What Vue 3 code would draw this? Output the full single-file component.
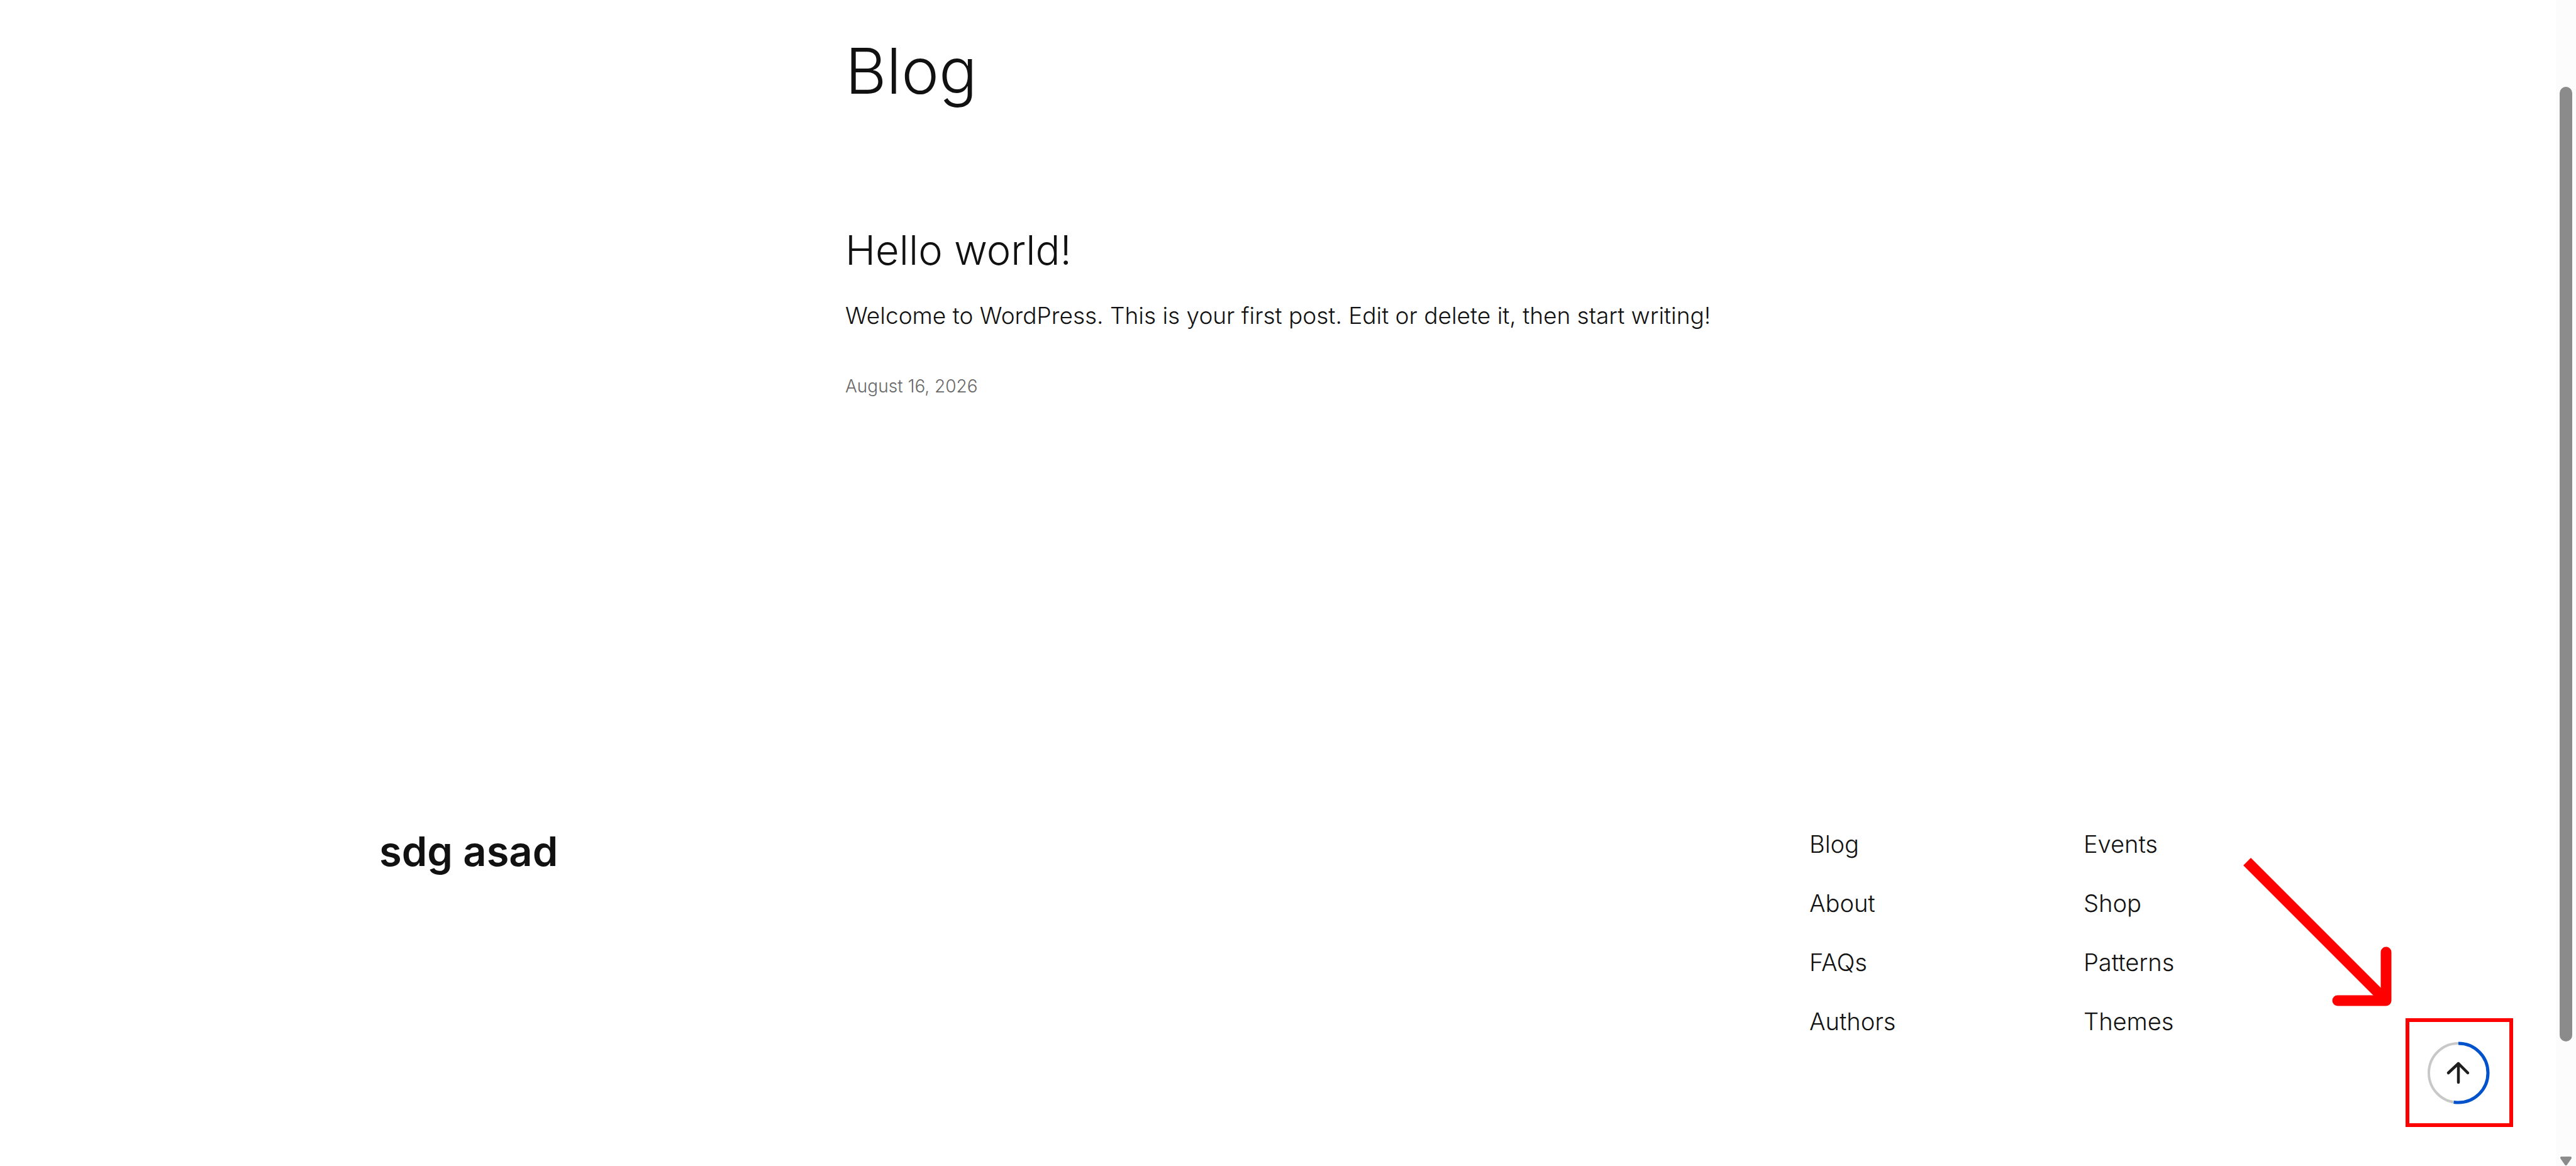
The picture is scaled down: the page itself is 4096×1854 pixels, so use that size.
<script setup>
const footerColumns = [
  ['Blog', 'About', 'FAQs', 'Authors'],
  ['Events', 'Shop', 'Patterns', 'Themes'],
]

function scrollToTop() {
  window.scrollTo({ top: 0, behavior: 'smooth' })
}
</script>

<template>
  <div class="page">
    <div class="site">
      <main class="content">
        <h1 class="page-title">Blog</h1>
        <article class="post">
          <h2 class="post-title"><a href="#hello-world">Hello world!</a></h2>
          <p class="excerpt">Welcome to WordPress. This is your first post. Edit or delete it, then start writing!</p>
          <a class="date" href="#hello-world"><time datetime="2026-08-16">August 16, 2026</time></a>
        </article>
      </main>

      <footer class="footer">
        <p class="brand"><a href="#home">sdg asad</a></p>
        <nav class="footer-nav" aria-label="Footer">
          <ul v-for="(column, i) in footerColumns" :key="i" class="nav-column">
            <li v-for="label in column" :key="label"><a href="#">{{ label }}</a></li>
          </ul>
        </nav>
      </footer>
    </div>

    <div class="scroll-track" aria-hidden="true">
      <div class="scroll-thumb"></div>
      <svg class="scroll-down" viewBox="0 0 20 16">
        <path d="M3 3H17L10 13Z" fill="#8b8b8b" stroke="#8b8b8b" stroke-width="4" stroke-linejoin="round" />
      </svg>
    </div>

    <div class="callout">
      <svg class="pointer" viewBox="0 0 236 236" fill="none" stroke="#f00" stroke-width="17" aria-hidden="true">
        <path d="M6 6L227 227" />
        <path d="M227 150V227H150" stroke-linecap="round" stroke-linejoin="round" />
      </svg>
      <div class="frame">
        <button class="to-top" type="button" aria-label="Scroll to top" @click="scrollToTop">
          <svg viewBox="0 0 98 98" fill="none" aria-hidden="true">
            <circle cx="49" cy="49" r="47" stroke="#c8c8c8" stroke-width="4" />
            <circle
              cx="49"
              cy="49"
              r="47"
              stroke="#0052cc"
              stroke-width="5"
              pathLength="1000"
              stroke-dasharray="525 475"
              transform="rotate(-90 49 49)"
            />
            <path
              d="M49 64V34M33 49L49 34L64 49"
              stroke="#1e1e1e"
              stroke-width="4.5"
              stroke-linecap="round"
              stroke-linejoin="round"
            />
          </svg>
        </button>
      </div>
    </div>
  </div>
</template>

<style>
body {
  margin: 0;
  background: #fff;
}
</style>

<style scoped>
.page {
  position: relative;
  display: flex;
  min-height: 100vh;
  overflow: hidden;
  color: #111;
  background: #fff;
  font-family: Inter, "Liberation Sans", sans-serif;
  font-size: 37px;
  font-weight: 300;
  line-height: 60px;
}

a {
  color: inherit;
  text-decoration: none;
}

.site {
  flex: 1;
  min-width: 0;
}

.content {
  max-width: 1376px;
  margin: 0 auto;
  padding-top: 54px;
}

.page-title {
  margin: 0 0 190px;
  font-size: 101px;
  font-weight: 300;
  line-height: 116px;
}

.post-title {
  margin: 0 0 36px;
  font-size: 65px;
  font-weight: 300;
  line-height: 76px;
}

.excerpt {
  margin: 0 0 60px;
  white-space: nowrap;
}

.date {
  display: block;
  color: #686868;
  font-size: 28px;
  line-height: 44px;
}

.footer {
  display: flex;
  justify-content: space-between;
  max-width: 2858px;
  margin: 0 auto;
  padding-top: 676px;
}

.brand {
  margin: 4px 0 0;
  font-size: 65px;
  font-weight: 600;
  line-height: 76px;
}

.footer-nav {
  display: grid;
  grid-template-columns: 436px 148px;
  font-size: 38px;
}

.nav-column {
  display: flex;
  flex-direction: column;
  gap: 34px;
  margin: 0;
  padding: 0;
  list-style: none;
}

.scroll-track {
  box-sizing: border-box;
  display: flex;
  flex-direction: column;
  align-items: center;
  width: 32px;
  padding-top: 138px;
  background: #fcfcfc;
}

.scroll-thumb {
  width: 20px;
  height: 1518px;
  border-radius: 10px;
  background: #8b8b8b;
}

.scroll-down {
  width: 20px;
  height: 16px;
  margin-top: auto;
}

.callout {
  position: absolute;
  right: 100px;
  bottom: 62px;
}

.pointer {
  display: block;
  width: 236px;
  height: 236px;
  margin: 0 0 19px;
}

.frame {
  box-sizing: border-box;
  display: flex;
  align-items: center;
  justify-content: center;
  width: 171px;
  height: 173px;
  margin-left: 258px;
  padding-right: 4px;
  border: 6px solid #f00;
}

.to-top {
  width: 98px;
  height: 98px;
  padding: 0;
  border: 0;
  border-radius: 50%;
  background: transparent;
  cursor: pointer;
}

.to-top svg {
  display: block;
  width: 98px;
  height: 98px;
  overflow: visible;
}
</style>
